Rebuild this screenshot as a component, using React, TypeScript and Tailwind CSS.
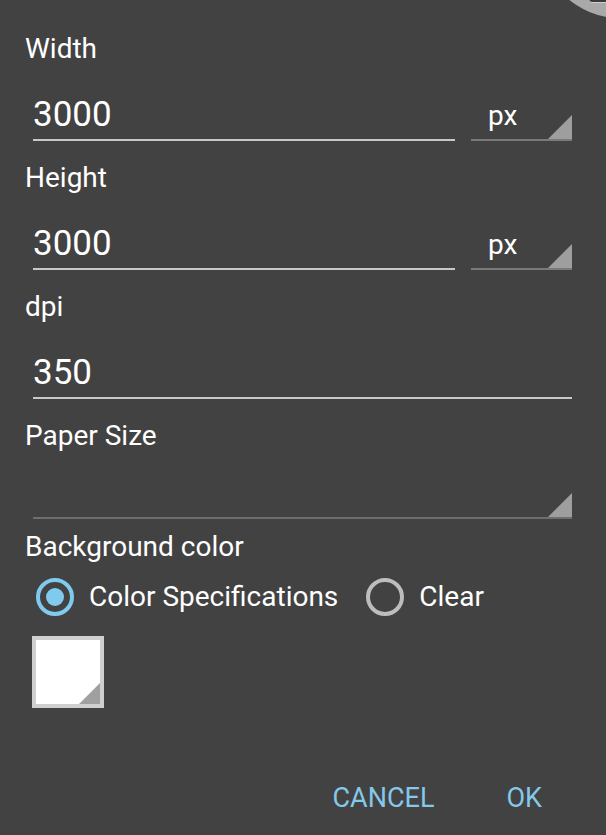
import React from 'react'

const Corner: React.FC<{ size: number }> = ({ size }) => (
  <svg width={size} height={size} viewBox="0 0 24 24" className="absolute right-0 bottom-0">
    <polygon points="24,0 24,24 0,24" fill="#9e9e9e" />
  </svg>
)

const Label: React.FC<{ children: React.ReactNode }> = ({ children }) => (
  <div className="h-[32px] text-[28px] leading-[32px] text-white">{children}</div>
)

const UnitSelect: React.FC = () => (
  <div className="relative w-[101px] h-[48px] border-b-2 border-[#7a7a7a]">
    <div className="pl-[17px] pt-[7px] text-[28px] leading-[32px] text-white">px</div>
    <Corner size={24} />
  </div>
)

const NumberField: React.FC<{ value: string; unit?: boolean }> = ({ value, unit }) => (
  <div className="flex items-start gap-[16px] ml-[8px] mr-[34px] mt-[28px] mb-[21px]">
    <div className="flex-1 h-[48px] border-b-2 border-[#c8c8c8]">
      <div className="pt-[2px] text-[35px] leading-[40px] text-white">{value}</div>
    </div>
    {unit && <UnitSelect />}
  </div>
)

const Radio: React.FC<{ checked?: boolean; label: string }> = ({ checked, label }) => (
  <div className="flex items-center h-[48px]">
    <div
      className={
        checked
          ? 'w-[38px] h-[38px] rounded-full border-[4px] border-[#80caf0] flex items-center justify-center'
          : 'w-[38px] h-[38px] rounded-full border-[4px] border-[#bdbdbd]'
      }
    >
      {checked && <div className="w-[18px] h-[18px] rounded-full bg-[#80caf0]" />}
    </div>
    <span className="ml-[15px] text-[28px] leading-[32px] text-white">{label}</span>
  </div>
)

export default function App() {
  return (
    <div
      className="relative w-[606px] h-[835px] overflow-hidden bg-[#424242] pt-[33px] pl-[25px]"
      style={{ fontFamily: 'Roboto, "Noto Sans", sans-serif' }}
    >
      <div className="absolute left-[540px] top-[-142px] w-[160px] h-[160px] rounded-full bg-[#a9a9a9]" />
      <div className="absolute left-[588px] top-[-10px] w-[30px] h-[13px] rounded-[4px] bg-[#3a3a3a] border border-[#cfcfcf]" />

      <Label>Width</Label>
      <NumberField value="3000" unit />

      <Label>Height</Label>
      <NumberField value="3000" unit />

      <Label>dpi</Label>
      <NumberField value="350" />

      <Label>Paper Size</Label>
      <div className="relative ml-[8px] mr-[34px] mt-[28px] h-[39px] border-b-[2px] border-[#6e6e6e]">
        <Corner size={24} />
      </div>

      <div className="mt-[12px]">
        <Label>Background color</Label>
      </div>

      <div className="flex items-center gap-[28px] ml-[11px] mt-[10px]">
        <Radio checked label="Color Specifications" />
        <Radio label="Clear" />
      </div>

      <div className="ml-[7px] mt-[15px] w-[72px] h-[72px] bg-[#cfcfcf] p-[4px]">
        <div className="relative w-full h-full bg-white">
          <svg width="21" height="21" viewBox="0 0 24 24" className="absolute right-[0px] bottom-[0px]">
            <polygon points="24,0 24,24 0,24" fill="#a0a0a0" />
          </svg>
        </div>
      </div>

      <div className="flex justify-end gap-[72px] pr-[64px] mt-[74px] -ml-[25px]">
        <span className="text-[27px] leading-[32px] text-[#84c8ea]">CANCEL</span>
        <span className="text-[27px] leading-[32px] text-[#84c8ea]">OK</span>
      </div>
    </div>
  )
}
